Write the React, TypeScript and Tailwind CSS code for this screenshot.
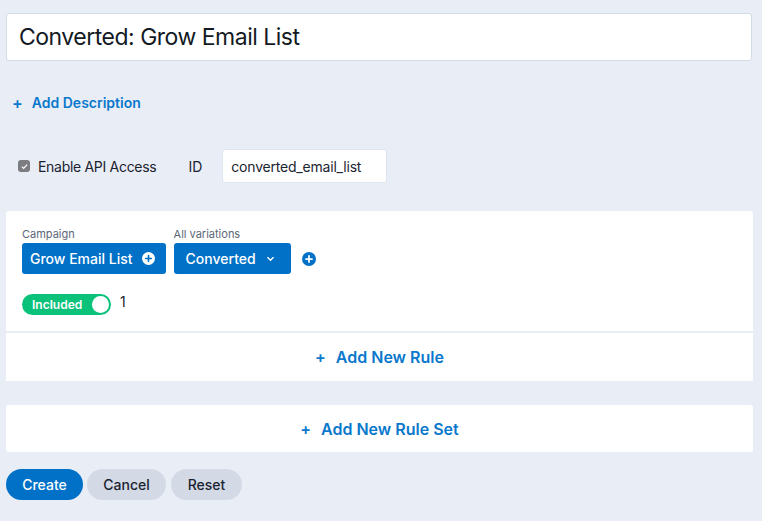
import { useState } from 'react'

function PlusCircle({ className }: { className?: string }) {
  return (
    <svg viewBox="0 0 16 16" className={className} aria-hidden>
      <circle cx="8" cy="8" r="8" fill="currentColor" />
      <path d="M8 4.5v7M4.5 8h7" stroke="var(--plus)" strokeWidth="2" strokeLinecap="round" />
    </svg>
  )
}

export default function App() {
  const [title, setTitle] = useState('Converted: Grow Email List')
  const [apiId, setApiId] = useState('converted_email_list')
  const [apiEnabled, setApiEnabled] = useState(true)

  return (
    <div
      className="min-h-[521px] w-[762px] bg-[#e9eef6] px-[6px] pt-[13px] text-[#1b2330]"
      style={{ fontFamily: 'Inter, "Noto Sans", sans-serif' }}
    >
      {/* Title */}
      <input
        value={title}
        onChange={(e) => setTitle(e.target.value)}
        className="block h-[48px] w-[746px] rounded-[3px] border border-[#d3dbe7] bg-white px-3 text-[23px] tracking-[-0.5px] text-[#131a24] outline-none"
      />

      {/* Add description */}
      <button className="mt-[31px] ml-[6px] flex items-center gap-[9px] text-[14px] font-semibold text-[#0a78cc]">
        <span className="text-[16px] leading-none">+</span>
        Add Description
      </button>

      {/* API access */}
      <div className="mt-[36px] flex items-center pl-[12px]">
        <label className="flex items-center gap-[8px] text-[14px] tracking-[-0.3px]">
          <span
            onClick={() => setApiEnabled(!apiEnabled)}
            className="flex h-[12px] w-[12px] items-center justify-center rounded-[3px] bg-[#7c7d80]"
          >
            {apiEnabled && (
              <svg viewBox="0 0 12 12" className="h-[9px] w-[9px]">
                <path d="M2.5 6.2l2.3 2.3 4.7-5" fill="none" stroke="white" strokeWidth="1.6" />
              </svg>
            )}
          </span>
          Enable API Access
        </label>
        <span className="ml-[32px] text-[14px]">ID</span>
        <input
          value={apiId}
          onChange={(e) => setApiId(e.target.value)}
          className="ml-[20px] h-[34px] w-[165px] rounded-[3px] border border-[#dfe5ee] bg-white px-[8px] text-[14px] tracking-[-0.2px] outline-none"
        />
      </div>

      {/* Rule set */}
      <div className="mt-[28px] w-[747px] rounded-t-[3px] bg-white">
        <div className="px-[16px] pt-[16px] pb-[16px]">
          <div className="flex items-end gap-[8px]">
            <div>
              <div className="mb-[2px] text-[11px] leading-[14px] text-[#5b6778]">Campaign</div>
              <button className="flex h-[31px] items-center gap-[9px] rounded-[3px] bg-[#0071c7] pl-[8px] pr-[11px] text-[14px] font-medium text-white [--plus:#0071c7]">
                Grow Email List
                <PlusCircle className="h-[13px] w-[13px] text-white" />
              </button>
            </div>
            <div>
              <div className="mb-[2px] text-[11px] leading-[14px] text-[#5b6778]">All variations</div>
              <button className="flex h-[31px] items-center gap-[10px] rounded-[3px] bg-[#0071c7] pl-[12px] pr-[16px] text-[14px] font-medium text-white">
                Converted
                <svg viewBox="0 0 10 10" className="h-[9px] w-[9px]">
                  <path d="M2 4l3 3 3-3" fill="none" stroke="white" strokeWidth="1.5" strokeLinecap="round" />
                </svg>
              </button>
            </div>
            <div className="flex h-[31px] items-center pl-[3px]">
              <PlusCircle className="h-[14px] w-[14px] text-[#0071c7] [--plus:white]" />
            </div>
          </div>

          <div className="mt-[20px] flex h-[21px] items-center gap-[9px]">
            <div className="flex h-[21px] w-[89px] items-center justify-between rounded-full bg-[#0bc27b] pl-[10px] pr-[2px] text-[12px] font-semibold text-white">
              Included
              <span className="h-[17px] w-[17px] rounded-full bg-white" />
            </div>
            <span className="-mt-[6px] text-[14px] leading-[20px]">1</span>
          </div>
        </div>

        <div className="h-[2px] bg-[#e9eef6]" />

        <button className="flex h-[48px] w-full items-center justify-center gap-[10px] text-[16px] font-semibold text-[#0a78cc]">
          <span className="leading-none">+</span>
          Add New Rule
        </button>
      </div>

      {/* Add rule set */}
      <button className="mt-[24px] flex h-[47px] w-[747px] items-center justify-center gap-[10px] rounded-[3px] bg-white text-[16px] font-semibold text-[#0a78cc]">
        <span className="leading-none">+</span>
        Add New Rule Set
      </button>

      {/* Actions */}
      <div className="mt-[17px] flex gap-[4px]">
        <button className="h-[31px] w-[77px] rounded-full bg-[#0071c7] text-[14px] font-medium text-white">Create</button>
        <button className="h-[31px] w-[79px] rounded-full bg-[#d3dae6] text-[14px] font-medium text-[#1b2330]">Cancel</button>
        <button className="ml-[1px] h-[31px] w-[71px] rounded-full bg-[#d3dae6] text-[14px] font-medium text-[#1b2330]">Reset</button>
      </div>
    </div>
  )
}
